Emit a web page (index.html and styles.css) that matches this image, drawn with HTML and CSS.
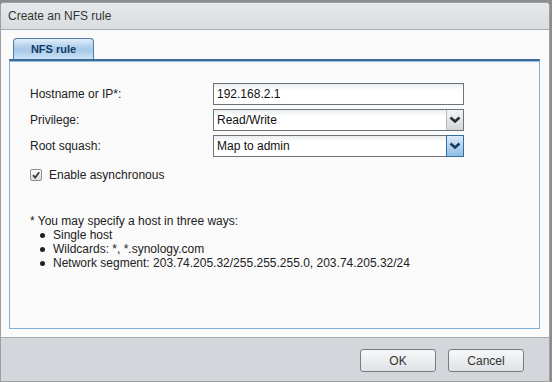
FILE: index.html
```html
<!DOCTYPE html>
<html>
<head>
<meta charset="utf-8">
<link rel="stylesheet" href="styles.css">
</head>
<body>
<div class="window">
  <div class="titlebar">Create an NFS rule</div>
  <div class="content">
    <div class="tabs"><div class="tab">NFS rule</div></div>
    <div class="panel">
      <div class="form">
        <div class="row">
          <div class="label">Hostname or IP*:</div>
          <div class="field text">192.168.2.1</div>
        </div>
        <div class="row">
          <div class="label">Privilege:</div>
          <div class="field select">
            <span class="value">Read/Write</span>
            <span class="arrow">
              <svg width="12" height="8" viewBox="0 0 12 8"><path d="M1.5 1.5 L6 5.5 L10.5 1.5" fill="none" stroke="#2b2f33" stroke-width="2.6"/></svg>
            </span>
          </div>
        </div>
        <div class="row">
          <div class="label">Root squash:</div>
          <div class="field select focus">
            <span class="value">Map to admin</span>
            <span class="arrow">
              <svg width="12" height="8" viewBox="0 0 12 8"><path d="M1.5 1.5 L6 5.5 L10.5 1.5" fill="none" stroke="#123e66" stroke-width="2.6"/></svg>
            </span>
          </div>
        </div>
      </div>
      <div class="check-row">
        <span class="checkbox">
          <svg width="10" height="10" viewBox="0 0 10 10"><path d="M2 5.2 L4.2 7.6 L8.2 2.2" fill="none" stroke="#3a3d40" stroke-width="1.8"/></svg>
        </span>
        <span class="check-label">Enable asynchronous</span>
      </div>
      <div class="note">
        <div class="note-title">* You may specify a host in three ways:</div>
        <ul class="list">
          <li>Single host</li>
          <li>Wildcards: *, *.synology.com</li>
          <li>Network segment: 203.74.205.32/255.255.255.0, 203.74.205.32/24</li>
        </ul>
      </div>
    </div>
  </div>
  <div class="footer">
    <button class="btn">OK</button>
    <button class="btn">Cancel</button>
  </div>
</div>
</body>
</html>
```
FILE: styles.css
```css
* { box-sizing: border-box; }
html, body { margin: 0; padding: 0; }
body {
  background: #8c8c8c;
  width: 552px;
  height: 382px;
  overflow: hidden;
  font-family: "Liberation Sans", Arial, sans-serif;
  font-size: 12px;
  color: #222;
}
.window {
  margin-top: 2px;
  width: 550px;
  height: 380px;
  border: 1px solid #9d9fa1;
  border-radius: 4px 4px 0 0;
  background: #fafafa;
  display: flex;
  flex-direction: column;
  overflow: hidden;
}
.titlebar {
  height: 27px;
  border-bottom: 1px solid #a9abad;
  background: linear-gradient(#e6e9ec, #dadde0);
  padding-left: 7px;
  line-height: 26px;
  color: #333;
  font-size: 12px;
}
.content {
  height: 307px;
  padding: 8px 9px 8px 8px;
  background: #fafafa;
  display: flex;
  flex-direction: column;
}
.tabs { display: flex; padding-left: 4px; height: 21px; }
.tab {
  width: 81px;
  height: 21px;
  border: 1px solid #4a7eae;
  border-bottom: none;
  border-radius: 4px 4px 0 0;
  background: linear-gradient(#e4eef8 0%, #b6d3ee 35%, #a6c8e8 55%, #cfe3f5 100%);
  color: #123c64;
  font-weight: bold;
  font-size: 11px;
  text-align: center;
  line-height: 20px;
}
.panel {
  flex: 1;
  border: 1px solid #7fb0d9;
  border-top: 3px solid #3b6d9b;
  box-shadow: inset 0 0 0 0 transparent;
  background: #fafafa;
  padding: 21px 20px 0 20px;
  position: relative;
}
.panel::before {
  content: "";
  display: block;
  height: 1px;
  background: #94bde0;
  margin: -22px -20px 21px -20px;
}
.form { display: flex; flex-direction: column; gap: 4px; }
.row { display: flex; align-items: center; height: 22px; }
.label { width: 183px; color: #222; }
.field {
  width: 251px;
  height: 22px;
  border: 1px solid #6e7377;
  background: linear-gradient(#e9ecee 0px, #ffffff 6px, #ffffff 100%);
  display: flex;
  align-items: center;
  color: #111;
}
.text { padding-left: 3px; }
.select .value { flex: 1; padding-left: 3px; }
.select .arrow {
  width: 17px;
  height: 20px;
  border-left: 1px solid #b9bcbf;
  background: linear-gradient(#f4f5f6, #d2d4d6);
  display: flex;
  align-items: center;
  justify-content: center;
}
.select.focus { border-right-color: #2f6ea6; }
.select.focus .arrow {
  border-left: 1px solid #2f6ea6;
  background: linear-gradient(#dbe9f6, #92bde4);
  height: 22px;
  margin: -1px 0;
  border-top: 1px solid #2f6ea6;
  border-bottom: 1px solid #2f6ea6;
}
.check-row {
  display: flex;
  align-items: center;
  height: 16px;
  margin-top: 10px;
}
.checkbox {
  width: 12px;
  height: 12px;
  border: 1px solid #8d9093;
  border-radius: 2px;
  background: linear-gradient(#fafafa, #dcdee0);
  display: flex;
  align-items: center;
  justify-content: center;
  margin-right: 7px;
}
.check-label { color: #222; }
.note { margin-top: 31px; line-height: 14px; color: #222; }
.list { list-style: none; margin: 0; padding: 0; }
.list li { display: flex; align-items: center; }
.list li::before {
  content: "";
  width: 5px;
  height: 5px;
  border-radius: 50%;
  background: #222;
  margin-left: 10px;
  margin-right: 8px;
}
.footer {
  height: 44px;
  border-top: 1px solid #a6aaae;
  background: #d3d7db;
  display: flex;
  justify-content: flex-end;
  align-items: flex-start;
  padding: 11px 25px 0 0;
  gap: 12px;
}
.btn {
  width: 76px;
  height: 23px;
  border: 1px solid #777b7f;
  border-radius: 3px;
  background: linear-gradient(#f7f8f9, #dfe2e5);
  font-family: "Liberation Sans", Arial, sans-serif;
  font-size: 12px;
  color: #333;
  padding: 0;
}
```
